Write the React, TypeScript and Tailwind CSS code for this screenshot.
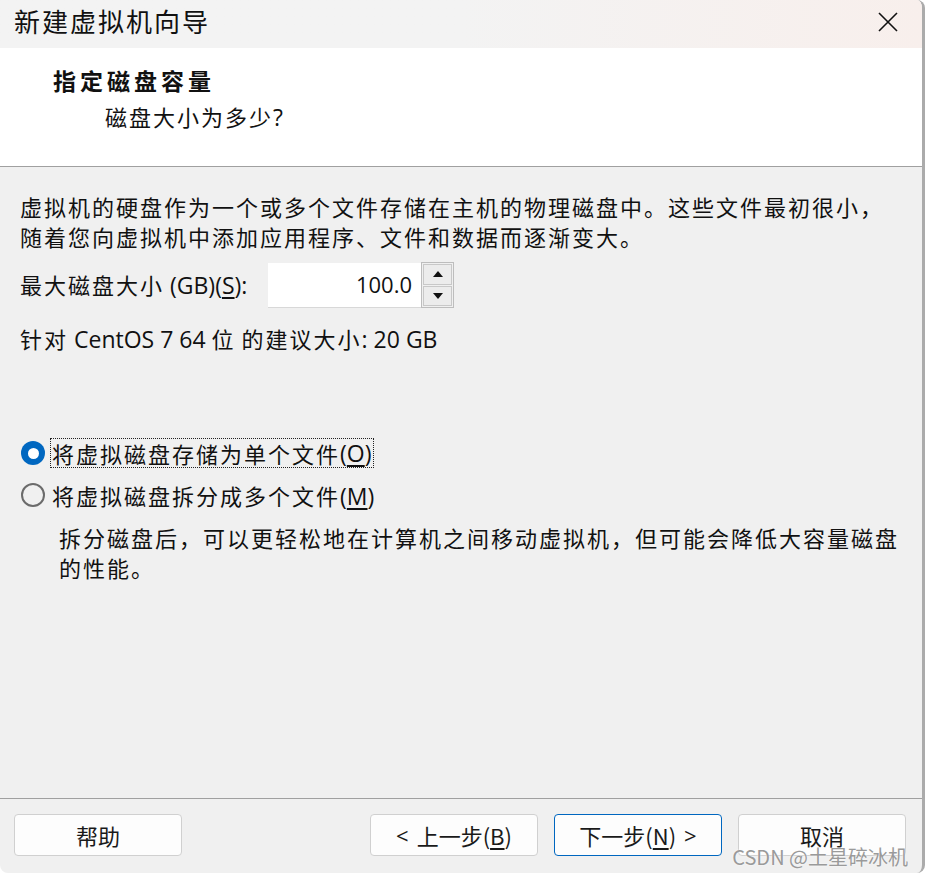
import React from "react";

const CJK = /([\u3000-\u303f\u3400-\u9fff\uff00-\uffef]+)/;

function T({ s, t = "tracking-[2px]" }: { s: string; t?: string }) {
  const parts = s.split(CJK);
  return (
    <>
      {parts.map((p, i) =>
        p === "" ? null : CJK.test(p) ? (
          <span key={i} className={t}>
            {p}
          </span>
        ) : (
          <span key={i} className="text-[23px] [font-family:'Open_Sans','Noto_Sans_CJK_SC',sans-serif]">{p}</span>
        )
      )}
    </>
  );
}

function Btn({
  children,
  primary = false,
}: {
  children: React.ReactNode;
  primary?: boolean;
}) {
  return (
    <div
      className={
        primary
          ? "w-[168px] h-[42px] rounded-[4px] border border-[#0067c0] bg-[#fdfdfd] flex items-center justify-center text-[22px] text-[#1a1a1a]"
          : "w-[168px] h-[42px] rounded-[4px] border border-[#d0d0d0] bg-[#fdfdfd] flex items-center justify-center text-[22px] text-[#1a1a1a]"
      }
    >
      {children}
    </div>
  );
}

export default function App() {
  return (
    <div
      className="w-[925px] h-[873px] bg-white flex overflow-hidden"
      style={{ fontFamily: '"Noto Sans CJK SC", "Noto Sans", sans-serif' }}
    >
      <div className="relative w-[925px] h-[873px] flex flex-col bg-[#f0f0f0] border-r-[3px] border-[#ababab] rounded-tr-[8px] rounded-b-[8px] overflow-hidden">
        {/* Title bar */}
        <div className="h-[48px] shrink-0 flex items-center justify-between pl-[14px] pr-[20px] bg-gradient-to-r from-[#f3f3f3] via-[#f3f3f3] to-[#f8efec]">
          <div className="text-[26px] leading-none text-[#111] mt-[-6px]">
            <span className="tracking-[2px]">新建虚拟机向导</span>
          </div>
          <svg width="22" height="22" viewBox="0 0 22 22" className="mt-[-4px] mr-[3px]">
            <path d="M2 2 L20 20 M20 2 L2 20" stroke="#111" strokeWidth="1.6" fill="none" />
          </svg>
        </div>

        {/* Header */}
        <div className="h-[119px] shrink-0 bg-white border-b border-[#a0a0a0] pt-[18px]">
          <div className="pl-[53px] text-[23px] font-bold leading-[28px] text-[#111]">
            <span className="tracking-[4px]">指定磁盘容量</span>
          </div>
          <div className="pl-[105px] mt-[8px] text-[22px] leading-[28px] text-[#111]">
            <T s="磁盘大小为多少?" />
          </div>
        </div>

        {/* Body */}
        <div className="flex-1 flex flex-col pt-[24px] pl-[20px] text-[22px] text-[#111]">
          <div className="leading-[30px]">
            <div>
              <T s="虚拟机的硬盘作为一个或多个文件存储在主机的物理磁盘中。这些文件最初很小，" />
            </div>
            <div>
              <T s="随着您向虚拟机中添加应用程序、文件和数据而逐渐变大。" />
            </div>
          </div>

          <div className="flex items-center mt-[11px] h-[46px]">
            <div className="w-[248px]">
              <T s="最大磁盘大小 (GB)(" />
              <span className="text-[23px] underline underline-offset-[3px] [font-family:'Open_Sans',sans-serif]">S</span>
              <span className="text-[23px] [font-family:'Open_Sans',sans-serif]">):</span>
            </div>
            <div className="w-[153px] h-[45px] bg-white border-b border-[#d8d8d8] flex items-center justify-end pr-[9px] text-[22px] [font-family:'Open_Sans',sans-serif]">
              100.0
            </div>
            <div className="w-[33px] h-[46px] border border-[#bdbdbd] bg-[#f0f0f0] flex flex-col p-px gap-px">
              <div className="flex-1 border border-[#c8c8c8] bg-[#ececec] flex items-center justify-center">
                <svg width="10" height="6" viewBox="0 0 10 6">
                  <path d="M0 6 L5 0 L10 6 Z" fill="#111" />
                </svg>
              </div>
              <div className="flex-1 border border-[#c8c8c8] bg-[#ececec] flex items-center justify-center">
                <svg width="10" height="6" viewBox="0 0 10 6">
                  <path d="M0 0 L5 6 L10 0 Z" fill="#111" />
                </svg>
              </div>
            </div>
          </div>

          <div className="mt-[15px] leading-[30px]">
            <T s="针对 CentOS 7 64 位 的建议大小: 20 GB" />
          </div>

          <div className="mt-[84px] flex items-center h-[30px]">
            <div className="ml-[1px] w-[24px] h-[24px] rounded-full bg-[#0067c0] flex items-center justify-center">
              <div className="w-[11px] h-[11px] rounded-full bg-white" />
            </div>
            <div className="ml-[5px] px-[1px] h-[30px] leading-[28px] border border-dotted border-[#222] flex items-center">
              <T s="将虚拟磁盘存储为单个文件(" />
              <span className="text-[23px] underline underline-offset-[3px] [font-family:'Open_Sans',sans-serif]">O</span>
              <span className="text-[23px] [font-family:'Open_Sans',sans-serif]">)</span>
            </div>
          </div>

          <div className="mt-[12px] flex items-center h-[30px]">
            <div className="ml-[1px] w-[24px] h-[24px] rounded-full border-[2px] border-[#6b6b6b]" />
            <div className="ml-[7px] leading-[28px]">
              <T s="将虚拟磁盘拆分成多个文件(" />
              <span className="text-[23px] underline underline-offset-[3px] [font-family:'Open_Sans',sans-serif]">M</span>
              <span className="text-[23px] [font-family:'Open_Sans',sans-serif]">)</span>
            </div>
          </div>

          <div className="mt-[12px] pl-[39px] leading-[30px]">
            <div>
              <T s="拆分磁盘后，可以更轻松地在计算机之间移动虚拟机，但可能会降低大容量磁盘" />
            </div>
            <div>
              <T s="的性能。" />
            </div>
          </div>
        </div>

        {/* Footer */}
        <div className="h-[75px] shrink-0 border-t border-[#a0a0a0] flex items-start pt-[15px] pl-[14px] pr-[16px]">
          <Btn>
            <span>帮助</span>
          </Btn>
          <div className="flex-1" />
          <div className="flex gap-[16px]">
            <Btn>
              <span className="mr-[8px] [font-family:'Open_Sans',sans-serif]">&lt;</span>
              <span>上一步(</span>
              <span className="underline underline-offset-[3px]">B</span>
              <span>)</span>
            </Btn>
            <Btn primary>
              <span>下一步(</span>
              <span className="underline underline-offset-[3px]">N</span>
              <span>)</span>
              <span className="ml-[8px] [font-family:'Open_Sans',sans-serif]">&gt;</span>
            </Btn>
            <Btn>
              <span>取消</span>
            </Btn>
          </div>
        </div>

        <div className="absolute right-[14px] bottom-[6px] text-[20px] text-[#9a9a9a] leading-none [text-shadow:0_0_2px_white]">
          CSDN @土星碎冰机
        </div>
      </div>
    </div>
  );
}
